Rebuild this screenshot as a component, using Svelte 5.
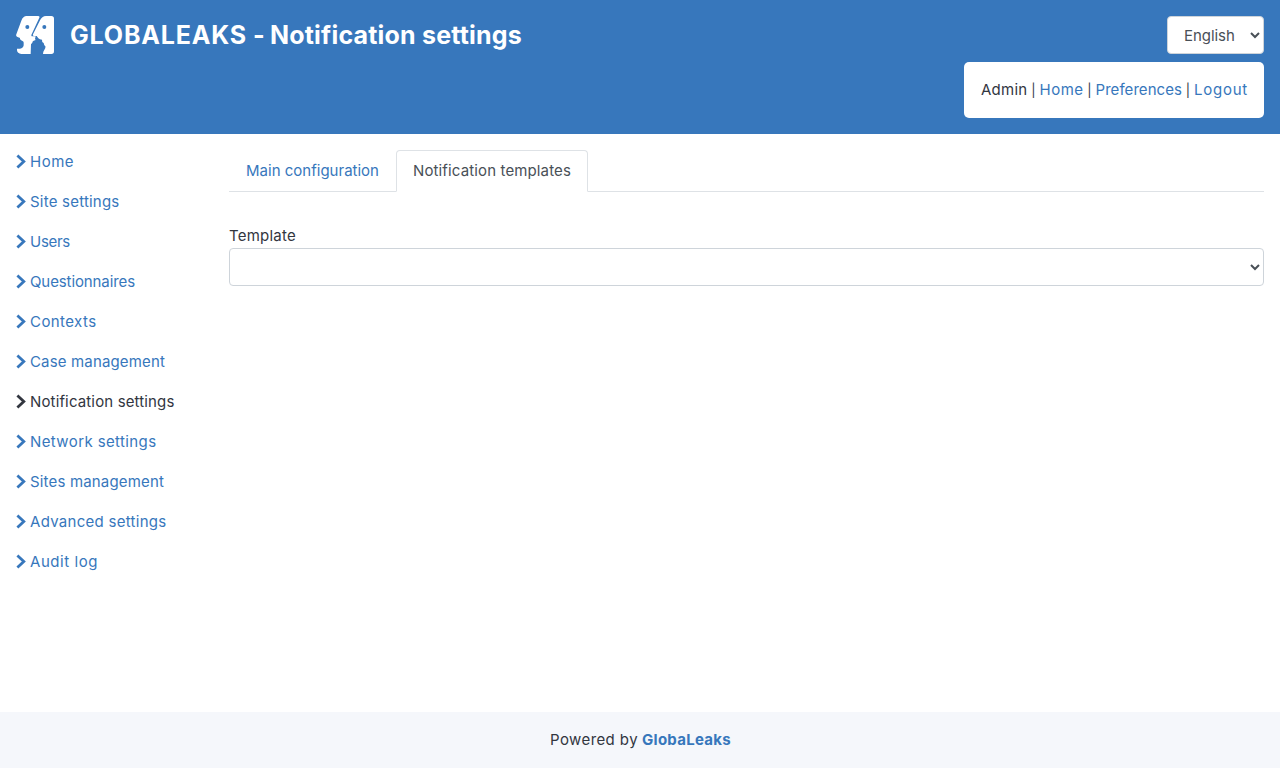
<script>
  const links = [
    ['Home', 44], ['Site settings', 89.5], ['Users', 40], ['Questionnaires', 105],
    ['Contexts', 66.5], ['Case management', 135], ['Notification settings', 144.5],
    ['Network settings', 126.5], ['Sites management', 134], ['Advanced settings', 136.5],
    ['Audit log', 68]
  ];
  const active = 'Notification settings';

  // Adjusts tracking so that a label occupies the given width.
  function track(node, width) {
    const natural = node.getBoundingClientRect().width;
    node.style.letterSpacing = `${(width - natural) / node.textContent.length}px`;
  }
</script>

<div class="page">
  <header>
    <div class="brand">
      <svg class="logo" viewBox="48 48 114 114" aria-hidden="true">
        <path fill="#fff" fill-rule="evenodd" d="M80 48H114Q120 48 118 53L95 103Q92 109 98 109H107L105 117L107 120L101 122Q97 123 97 128L93 133L92 162H64Q52 161 51 151V146H60Q70 145 71 136V130Q72 124 66 122Q59 120 60 114L51 110Q47 108 49 103L64 62Q69 48 80 48ZM82 75a6 6 0 1 0 0 12a6 6 0 1 0 0-12Z" />
        <path fill="#fff" fill-rule="evenodd" d="M138 48H154Q162 48 162 56V154Q162 162 154 162H129L130 155L136 144Q138 138 133 136L131 129Q125 127 126 119Q119 119 115 115L110 108H101Q97 107 99 103L119 63Q126 48 138 48ZM133 75a6 6 0 1 0 0 12a6 6 0 1 0 0-12Z" />
      </svg>
      <h1><span use:track={177}>GLOBALEAKS</span><span use:track={23}>-</span><span use:track={252}>Notification settings</span></h1>
    </div>
    <div class="tools">
      <select class="language" aria-label="Language"><option>English</option></select>
      <div class="account">
        <span use:track={46.5}>Admin</span><i>|</i><a href="#home" use:track={44}>Home</a><i>|</i><a href="#preferences" use:track={86.5}>Preferences</a><i>|</i><a href="#logout" use:track={54}>Logout</a>
      </div>
    </div>
  </header>

  <div class="body">
    <nav>
      {#each links as [label, width]}
        <a href="#menu" class:active={label === active}>
          <svg viewBox="0 0 10 16" aria-hidden="true"><path d="M1.4 1.5 7.8 7.5 1.4 13.5" /></svg>
          <span use:track={width}>{label}</span>
        </a>
      {/each}
    </nav>
    <main>
      <div class="tabs">
        <a href="#main" class="tab"><span use:track={133}>Main configuration</span></a>
        <a href="#templates" class="tab current"><span use:track={158}>Notification templates</span></a>
      </div>
      <label for="template"><span use:track={67}>Template</span></label>
      <select id="template"><option></option></select>
    </main>
  </div>

  <footer><span use:track={88}>Powered by</span><a href="#about" use:track={89}>GlobaLeaks</a></footer>
</div>

<style>
  :global(body) { background: #fff; }
  * { box-sizing: border-box; }
  .page {
    height: 768px;
    display: flex;
    flex-direction: column;
    font: 400 15px/24px Inter, sans-serif;
    color: #32363f;
  }
  a { color: #3777bc; text-decoration: none; }
  span, a { white-space: nowrap; }
  header {
    height: 134px;
    flex: none;
    padding: 16px;
    display: flex;
    justify-content: space-between;
    align-items: flex-start;
    background: #3777bc;
  }
  .brand { display: flex; gap: 16px; }
  .logo { width: 38px; height: 38px; }
  h1 { display: flex; margin: 0; font-size: 25px; font-weight: 650; line-height: 38px; color: #fff; }
  h1 span:nth-child(2) { width: 23px; padding-left: 6px; }
  .tools { display: flex; flex-direction: column; align-items: flex-end; gap: 8px; }
  select {
    height: 38px;
    padding: 6px 12px;
    border: 1px solid #ced4da;
    border-radius: 4px;
    background: #fff;
    color: #495057;
    font: 400 15px/24px Inter, sans-serif;
  }
  .language { width: 97px; letter-spacing: -0.05px; }
  .account {
    width: 300px;
    height: 56px;
    padding: 16px 16px 16px 17px;
    display: flex;
    border-radius: 5px;
    background: #fff;
  }
  .account > span, .account > a { flex: none; }
  i { width: 12px; flex: none; text-align: center; font-style: normal; font-size: 13px; }
  .body { flex: 1; display: flex; }
  nav { width: 213px; padding: 8px 16px; flex: none; }
  nav a { display: flex; align-items: center; gap: 4px; height: 40px; }
  nav svg { width: 10px; height: 16px; flex: none; fill: none; stroke: currentColor; stroke-width: 2.8; }
  nav .active { color: #32363f; }
  main { flex: 1; padding: 16px; }
  .tabs { display: flex; height: 42px; border-bottom: 1px solid #dee2e6; }
  .tab { height: 42px; padding: 8px 16px; border: 1px solid transparent; border-radius: 4px 4px 0 0; }
  .current { color: #495057; background: #fff; border-color: #dee2e6 #dee2e6 #fff; }
  label { display: block; margin-top: 32px; }
  main select { display: block; width: 100%; }
  footer {
    height: 56px;
    flex: none;
    display: flex;
    justify-content: center;
    align-items: center;
    gap: 4px;
    padding-left: 1px;
    background: #f5f7fb;
  }
  footer a { font-weight: 650; }
</style>
